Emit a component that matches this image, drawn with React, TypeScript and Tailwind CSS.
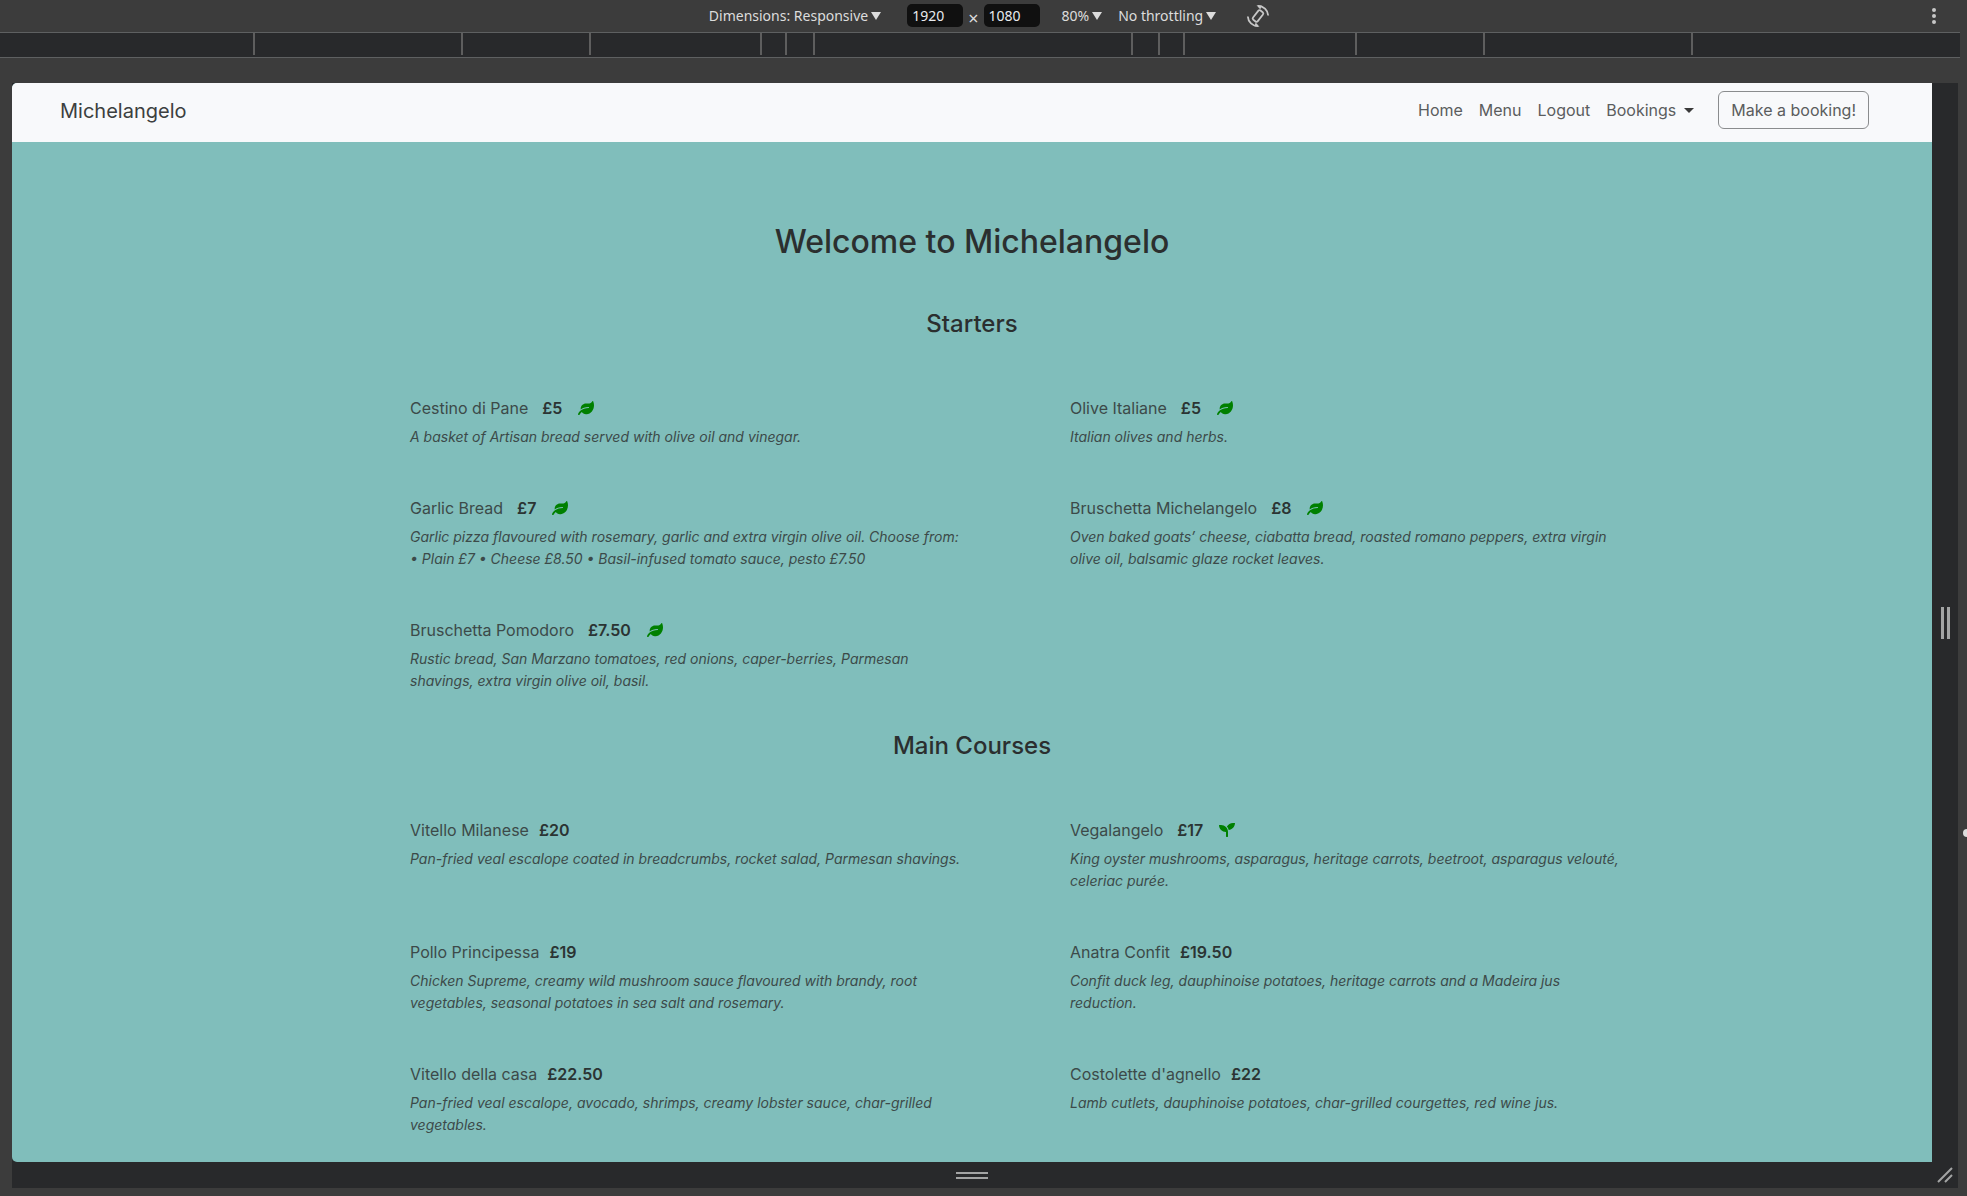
import React from "react";
import { FaLeaf, FaSeedling } from "react-icons/fa";

type Dish = {
  name: string;
  price: string;
  description: string;
  mark?: "leaf" | "seedling";
};

const starters: Dish[] = [
  { name: "Cestino di Pane", price: "£5", mark: "leaf", description: "A basket of Artisan bread served with olive oil and vinegar." },
  { name: "Olive Italiane", price: "£5", mark: "leaf", description: "Italian olives and herbs." },
  { name: "Garlic Bread", price: "£7", mark: "leaf", description: "Garlic pizza flavoured with rosemary, garlic and extra virgin olive oil. Choose from: • Plain £7 • Cheese £8.50 • Basil-infused tomato sauce, pesto £7.50" },
  { name: "Bruschetta Michelangelo", price: "£8", mark: "leaf", description: "Oven baked goats’ cheese, ciabatta bread, roasted romano peppers, extra virgin olive oil, balsamic glaze rocket leaves." },
  { name: "Bruschetta Pomodoro", price: "£7.50", mark: "leaf", description: "Rustic bread, San Marzano tomatoes, red onions, caper-berries, Parmesan shavings, extra virgin olive oil, basil." },
];

const mains: Dish[] = [
  { name: "Vitello Milanese", price: "£20", description: "Pan-fried veal escalope coated in breadcrumbs, rocket salad, Parmesan shavings." },
  { name: "Vegalangelo", price: "£17", mark: "seedling", description: "King oyster mushrooms, asparagus, heritage carrots, beetroot, asparagus velouté, celeriac purée." },
  { name: "Pollo Principessa", price: "£19", description: "Chicken Supreme, creamy wild mushroom sauce flavoured with brandy, root vegetables, seasonal potatoes in sea salt and rosemary." },
  { name: "Anatra Confit", price: "£19.50", description: "Confit duck leg, dauphinoise potatoes, heritage carrots and a Madeira jus reduction." },
  { name: "Vitello della casa", price: "£22.50", description: "Pan-fried veal escalope, avocado, shrimps, creamy lobster sauce, char-grilled vegetables." },
  { name: "Costolette d'agnello", price: "£22", description: "Lamb cutlets, dauphinoise potatoes, char-grilled courgettes, red wine jus." },
];

function Triangle() {
  return (
    <svg viewBox="0 0 10 8" className="h-2 w-2.5 shrink-0" fill="currentColor" aria-hidden="true">
      <path d="M0 0h10L5 8z" />
    </svg>
  );
}

function ToolbarMenu({ label }: { label: string }) {
  return (
    <button type="button" className="flex items-center gap-[3px] whitespace-nowrap">
      {label}
      <Triangle />
    </button>
  );
}

function SizeInput({ label, value }: { label: string; value: string }) {
  return (
    <input
      aria-label={label}
      defaultValue={value}
      className="h-[23px] w-14 rounded-[5px] bg-[#101010] px-[5px] text-[#e8eaed] outline-none"
    />
  );
}

function RotateIcon() {
  return (
    <svg viewBox="0 0 24 24" className="h-6 w-6" fill="none" stroke="#c7c7c7" strokeWidth="1.8" aria-hidden="true">
      <rect x="9" y="6.2" width="6" height="11.6" rx="1.6" transform="rotate(38 12 12)" />
      <path d="M12 1.9A10.2 10.2 0 0 1 22.2 11.5" />
      <path d="M10.5 1.2l5.2.2-1.4 4z" fill="#c7c7c7" stroke="none" />
      <path d="M12 22.1A10.2 10.2 0 0 1 1.8 12.5" />
      <path d="M13.5 22.8l-5.2-.2 1.4-4z" fill="#c7c7c7" stroke="none" />
    </svg>
  );
}

function Toolbar() {
  return (
    <div className="relative flex h-8 items-center justify-center bg-[#3c3c3c] pb-1 pl-3 pt-[3px] font-['Noto_Sans','Open_Sans',sans-serif] text-[14px] text-[#dcdcdc]">
      <ToolbarMenu label="Dimensions: Responsive" />
      <div className="ml-[26px] mr-[22px] flex items-center gap-[5px]">
        <SizeInput label="Width" value="1920" />
        <span className="pt-1 text-[18px] leading-5">×</span>
        <SizeInput label="Height" value="1080" />
      </div>
      <div className="flex items-center gap-4">
        <ToolbarMenu label="80%" />
        <ToolbarMenu label="No throttling" />
      </div>
      <button type="button" aria-label="Rotate" className="ml-[30px]">
        <RotateIcon />
      </button>
      <button type="button" aria-label="More options" className="absolute right-[31px] top-2 flex flex-col gap-0.5">
        <span className="size-1 rounded-full bg-[#c7c7c7]" />
        <span className="size-1 rounded-full bg-[#c7c7c7]" />
        <span className="size-1 rounded-full bg-[#c7c7c7]" />
      </button>
    </div>
  );
}

function Ruler() {
  return (
    <div className="mr-[7px] h-[26px] border-y border-[#5e6061] bg-[#28292b]">
      <div className="grid h-[22px] grid-cols-[255fr_208fr_128fr_171fr_25fr_28fr_318fr_27fr_25fr_172fr_128fr_208fr_267fr]">
        {Array.from({ length: 12 }, (_, i) => (
          <span key={i} className="border-r-2 border-[#5e5e5e]" />
        ))}
      </div>
    </div>
  );
}

function DishCard({ dish }: { dish: Dish }) {
  const marked = dish.mark !== undefined;
  return (
    <article className="pl-[98px] pr-2">
      <h3 className="mb-1.5 flex items-center text-[16px] leading-6 text-[#3c4a49]">
        {dish.name}
        <strong className={marked ? "ml-3.5 font-semibold text-[#2b3433]" : "ml-2.5 font-semibold text-[#2b3433]"}>{dish.price}</strong>
        {dish.mark === "leaf" && <FaLeaf className="ml-4 size-4 text-[#008000]" aria-label="Vegetarian" />}
        {dish.mark === "seedling" && <FaSeedling className="ml-4 size-4 text-[#008000]" aria-label="Vegan" />}
      </h3>
      <p className="text-[14px] italic leading-[22px] text-[#3c4a49]">{dish.description}</p>
    </article>
  );
}

function MenuSection({ title, dishes }: { title: string; dishes: Dish[] }) {
  return (
    <section className="mb-[38px]">
      <h2 className="mb-14 text-center text-[24px] font-medium leading-8 text-[#2b2f2f]">{title}</h2>
      <div className="grid grid-cols-2 gap-y-12">
        {dishes.map((dish) => (
          <DishCard key={dish.name} dish={dish} />
        ))}
      </div>
    </section>
  );
}

function Navbar() {
  return (
    <nav className="flex h-[59px] items-center justify-between bg-[#f8f9fb] pb-[5px] pl-12 pr-[63px] text-[16px] text-[#5b5d5e]">
      <a href="#home" className="pt-0.5 text-[20px] text-[#3c3f40]">Michelangelo</a>
      <div className="flex items-center gap-4">
        <a href="#home">Home</a>
        <a href="#menu">Menu</a>
        <a href="#logout">Logout</a>
        <button type="button" className="flex items-center gap-2">
          Bookings
          <svg viewBox="0 0 10 5" className="h-[5px] w-2.5" fill="#3a3a3a" aria-hidden="true">
            <path d="M0 0h10L5 5z" />
          </svg>
        </button>
        <button type="button" className="ml-2 h-[38px] rounded-md border border-[#8a8c8e] px-3">Make a booking!</button>
      </div>
    </nav>
  );
}

export default function App() {
  return (
    <div className="flex h-screen flex-col overflow-hidden bg-[#3c3c3c]">
      <Toolbar />
      <Ruler />
      <div className="relative mb-2 ml-3 mr-[9px] mt-[25px] grid min-h-0 flex-1 grid-cols-[1fr_26px] grid-rows-[1fr_26px] bg-[#28292b]">
        <main className="min-h-0 overflow-hidden rounded-l-[5px] bg-[#80bebb] font-['Inter',sans-serif]">
          <Navbar />
          <div className="mx-auto max-w-[1320px]">
            <h1 className="pb-[46px] pt-20 text-center text-[32px] font-medium leading-10 text-[#2b2f2f]">Welcome to Michelangelo</h1>
            <MenuSection title="Starters" dishes={starters} />
            <MenuSection title="Main Courses" dishes={mains} />
          </div>
        </main>
        <div className="flex items-center justify-center gap-[3px]">
          <span className="h-8 w-[3px] bg-[#a3a4a4]" />
          <span className="h-8 w-[3px] bg-[#a3a4a4]" />
        </div>
        <div className="flex flex-col items-center justify-center gap-[3px]">
          <span className="h-0.5 w-8 bg-[#a3a4a4]" />
          <span className="h-0.5 w-8 bg-[#a3a4a4]" />
        </div>
        <div className="flex items-center justify-center">
          <svg viewBox="0 0 16 16" className="size-4" stroke="#a3a4a4" strokeWidth="2" aria-hidden="true">
            <path d="M1 15L15 1M8 15L15 8" />
          </svg>
        </div>
        <span className="absolute -right-[13px] top-[746px] size-2 rounded-full bg-[#dcdcdc]" />
      </div>
    </div>
  );
}
